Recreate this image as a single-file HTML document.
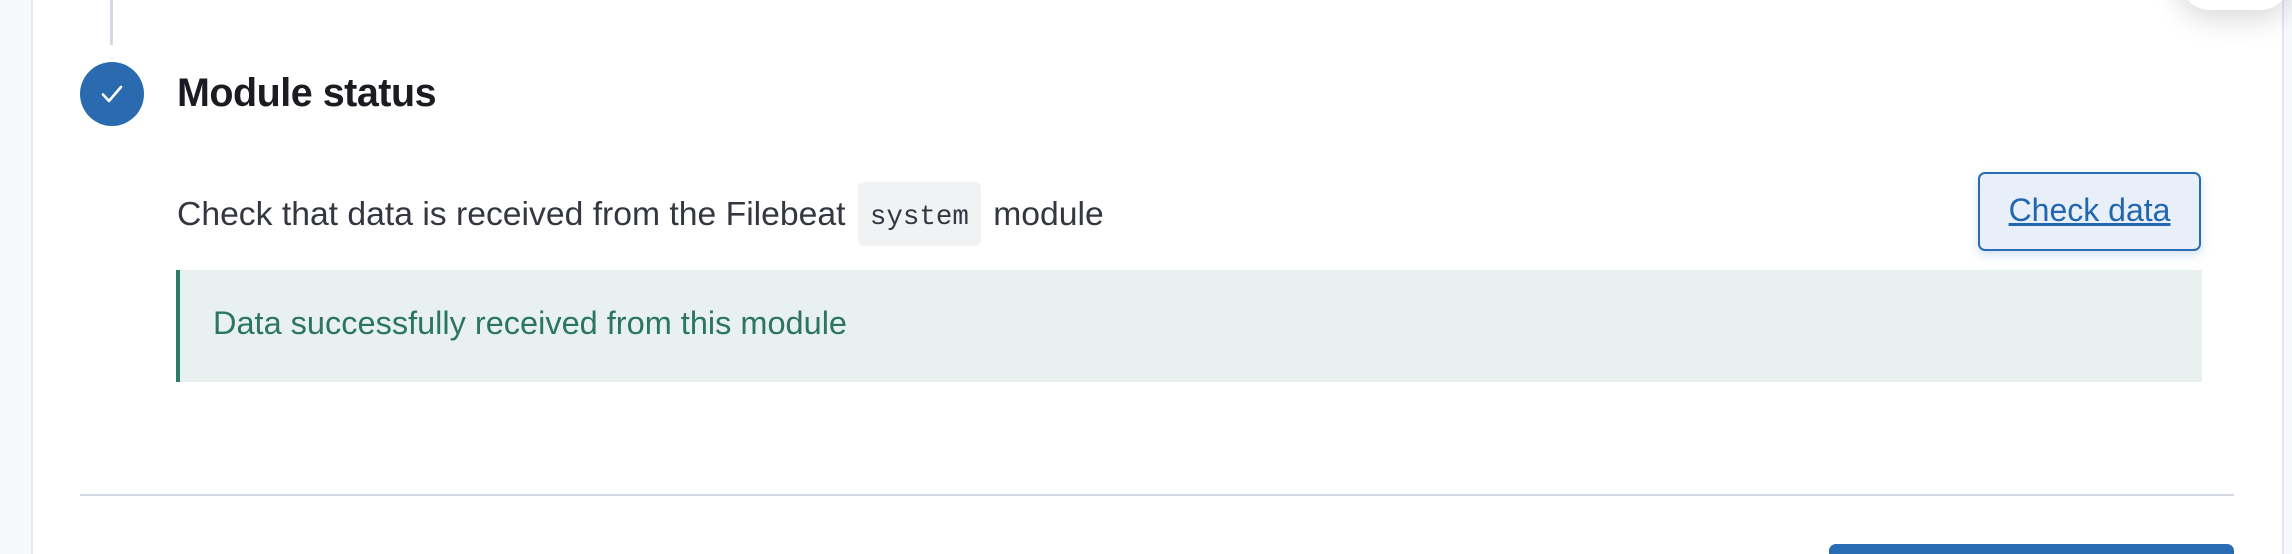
<!DOCTYPE html>
<html><head><style>
html,body{margin:0;padding:0;width:2292px;height:554px;overflow:hidden;background:#fff;font-family:"Liberation Sans",sans-serif;position:relative}
.abs{position:absolute}
</style></head><body>
<div class="abs" style="left:0;top:0;width:31px;height:554px;background:#f7f8fc;border-right:2px solid #e3e8f0"></div>
<div class="abs" style="left:2282px;top:0;width:10px;height:554px;background:#f7f8fc;border-left:2px solid #e3e8f0"></div>
<div class="abs" style="left:2180px;top:-50px;width:110px;height:60px;border-radius:30px;box-shadow:0 8px 30px rgba(0,0,0,0.16);background:#fff"></div>
<div class="abs" style="left:110px;top:0;width:3px;height:45px;background:#d3dae6"></div>
<div class="abs" style="left:80px;top:62px;width:64px;height:64px;border-radius:50%;background:#2a6bb0"></div>
<svg class="abs" style="left:94px;top:76px" width="36" height="36" viewBox="0 0 36 36"><path d="M9 18.5 L15 25 L27 11" fill="none" stroke="#fff" stroke-width="2.6" stroke-linecap="round" stroke-linejoin="round"/></svg>
<div class="abs" style="left:177px;top:70px;font-size:39.5px;font-weight:bold;color:#1a1c21;letter-spacing:-0.5px;line-height:46px">Module status</div>
<div class="abs" style="left:177px;top:182px;font-size:33.7px;color:#343741;line-height:64px;white-space:nowrap">Check that data is received from the Filebeat <span style="display:inline-block;background:#f1f2f4;border-radius:6px;padding:0 12px;font-family:'Liberation Mono',monospace;font-size:27.5px;height:64px;line-height:72px;vertical-align:top;margin:0 3px">system</span> module</div>
<div class="abs" style="left:176px;top:270px;width:2026px;height:112px;background:#e8f1ef;border-left:4px solid #2d7a69;box-sizing:border-box"></div>
<div class="abs" style="left:213px;top:304px;font-size:32.5px;color:#2b7561;line-height:38px">Data successfully received from this module</div>
<div class="abs" style="left:1978px;top:172px;width:223px;height:79px;box-sizing:border-box;border:2px solid #2a6cb3;border-radius:7px;background:#e8eff8;box-shadow:0 4px 10px rgba(42,108,179,0.2);text-align:center;line-height:73px;font-size:32px;color:#2166b0;text-decoration:underline">Check data</div>
<div class="abs" style="left:80px;top:494px;width:2154px;height:2px;background:#d3dae6"></div>
<div class="abs" style="left:1829px;top:544px;width:405px;height:20px;background:#2a6cb3;border-radius:7px"></div>
</body></html>
